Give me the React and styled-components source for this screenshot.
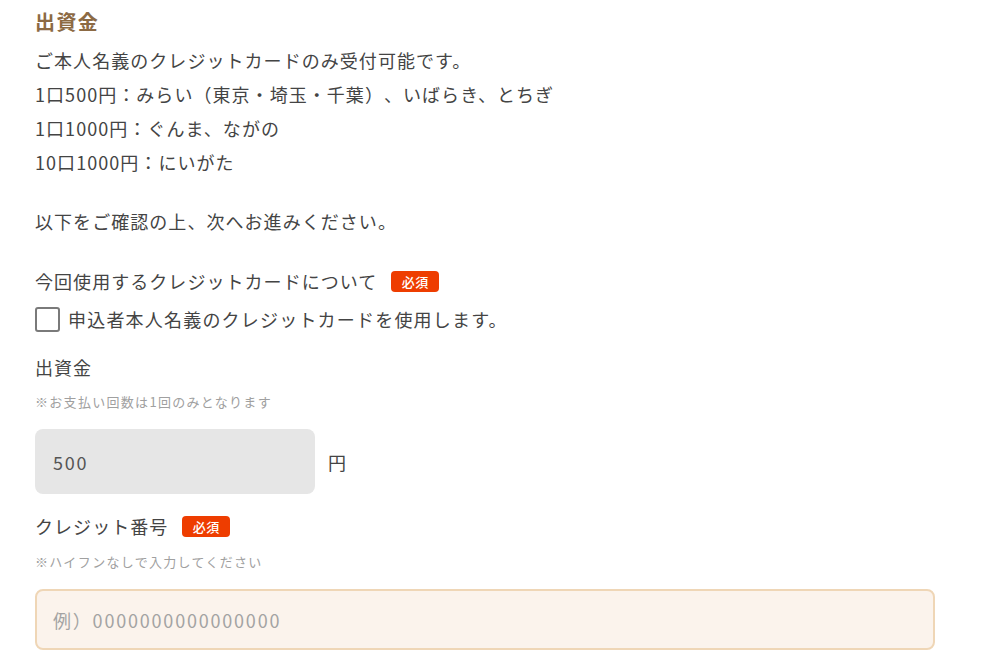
import React from "react";
import styled, { createGlobalStyle } from "styled-components";

const Global = createGlobalStyle`
  html, body { margin: 0; padding: 0; background: #fff; }
  body {
    font-family: "Noto Sans CJK JP", "Noto Sans", sans-serif;
    color: #444;
    text-spacing-trim: space-all;
  }
`;

const Page = styled.div`
  padding: 5px 35px 0 35px;
  width: 900px;
`;

const Heading = styled.h2`
  margin: 0;
  font-size: 20px;
  line-height: 34px;
  font-weight: 700;
  letter-spacing: 0.07em;
  color: #8c6a44;
`;

const Text = styled.p`
  margin: ${(p) => p.$mt || 0}px 0 0 0;
  font-size: 18px;
  line-height: 34px;
  letter-spacing: 1.05px;
`;

const Intro = styled.div`
  margin-top: 4px;
`;

const Label = styled.div`
  margin-top: ${(p) => p.$mt}px;
  display: flex;
  align-items: center;
  gap: 14px;
  font-size: 18px;
  line-height: 30px;
  letter-spacing: 1.05px;
`;

const Badge = styled.span`
  display: inline-flex;
  align-items: center;
  justify-content: center;
  height: 21px;
  width: 48px;
  border-radius: 4px;
  background: #ee3d00;
  color: #fff;
  font-size: 13px;
  font-weight: 500;
  letter-spacing: 0.05em;
  line-height: 1;
`;

const CheckRow = styled.label`
  margin-top: 11px;
  display: flex;
  align-items: center;
  gap: 8px;
  font-size: 18px;
  line-height: 25px;
  letter-spacing: 1.2px;
`;

const Box = styled.span`
  width: 25px;
  height: 25px;
  box-sizing: border-box;
  border: 2px solid #7a7a7a;
  border-radius: 3px;
  background: #fff;
  flex: none;
`;

const Note = styled.div`
  margin-top: ${(p) => p.$mt}px;
  font-size: 13px;
  line-height: 20px;
  letter-spacing: 0.1em;
  color: #a0a0a0;
`;

const FieldRow = styled.div`
  margin-top: 17px;
  display: flex;
  align-items: center;
  gap: 13px;
`;

const Field = styled.div`
  box-sizing: border-box;
  width: ${(p) => p.$w}px;
  height: ${(p) => p.$h}px;
  display: flex;
  align-items: center;
  padding-left: ${(p) => (p.$bordered ? 16 : 18)}px;
  border-radius: 8px;
  background: ${(p) => (p.$bordered ? "#fbf3ec" : "#e6e6e6")};
  border: ${(p) => (p.$bordered ? "2px solid #efd6b6" : "none")};
  color: ${(p) => (p.$placeholder ? "#a3a3a3" : "#555")};
  font-size: 18px;
  letter-spacing: 0.1em;
`;

const Unit = styled.span`
  font-size: 18px;
  letter-spacing: 0.04em;
`;

export default function App() {
  return (
    <>
      <Global />
      <Page>
        <Heading>出資金</Heading>
        <Intro>
          <Text>ご本人名義のクレジットカードのみ受付可能です。</Text>
          <Text>1口500円：みらい（東京・埼玉・千葉）、いばらき、とちぎ</Text>
          <Text>1口1000円：ぐんま、ながの</Text>
          <Text>10口1000円：にいがた</Text>
        </Intro>
        <Text $mt={25}>以下をご確認の上、次へお進みください。</Text>
        <Label $mt={28}>
          今回使用するクレジットカードについて
          <Badge>必須</Badge>
        </Label>
        <CheckRow>
          <Box />
          申込者本人名義のクレジットカードを使用します。
        </CheckRow>
        <Label $mt={20}>出資金</Label>
        <Note $mt={10}>※お支払い回数は1回のみとなります</Note>
        <FieldRow>
          <Field $w={280} $h={65}>500</Field>
          <Unit>円</Unit>
        </FieldRow>
        <Label $mt={17}>
          クレジット番号
          <Badge>必須</Badge>
        </Label>
        <Note $mt={11}>※ハイフンなしで入力してください</Note>
        <FieldRow>
          <Field $w={900} $h={61} $bordered $placeholder>
            例）0000000000000000
          </Field>
        </FieldRow>
      </Page>
    </>
  );
}
